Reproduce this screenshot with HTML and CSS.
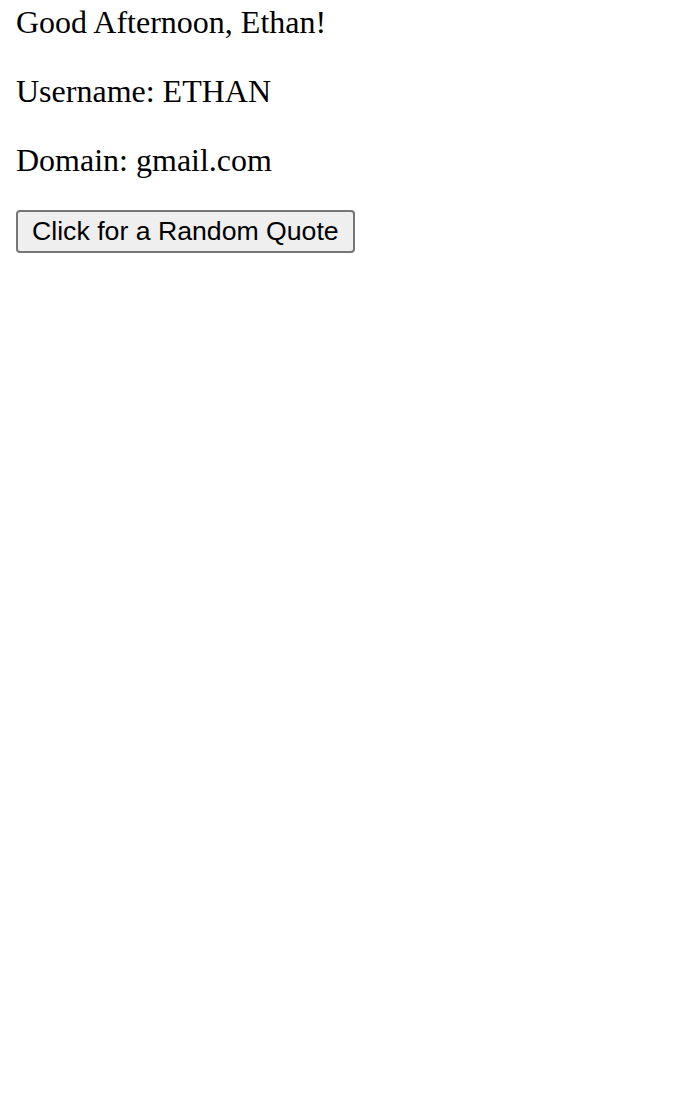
FILE: index.html
```html
<!DOCTYPE html>
<html>
<head>
<meta charset="utf-8">
<title>Greeting</title>
<link rel="stylesheet" href="styles.css">
</head>
<body>
<div class="page">
  <p class="line">Good Afternoon, Ethan!</p>
  <p class="line">Username: ETHAN</p>
  <p class="line">Domain: gmail.com</p>
  <button class="quote-btn" type="button">Click for a Random Quote</button>
</div>
</body>
</html>
```

FILE: styles.css
```css
html, body {
  margin: 0;
  padding: 0;
  background: #ffffff;
}
.page {
  padding: 4px 16px 0;
  font-family: "Liberation Serif", "Times New Roman", serif;
  font-size: 32px;
  color: #000000;
}
.line {
  margin: 0 0 32px;
  line-height: 1.15;
}
.quote-btn {
  font-family: "Liberation Sans", Arial, sans-serif;
  font-size: 26.67px;
  color: #000000;
  background: #efefef;
  border: 2px solid #767676;
  border-radius: 4px;
  padding: 4px 14px;
  line-height: normal;
  margin: 0;
}
```
